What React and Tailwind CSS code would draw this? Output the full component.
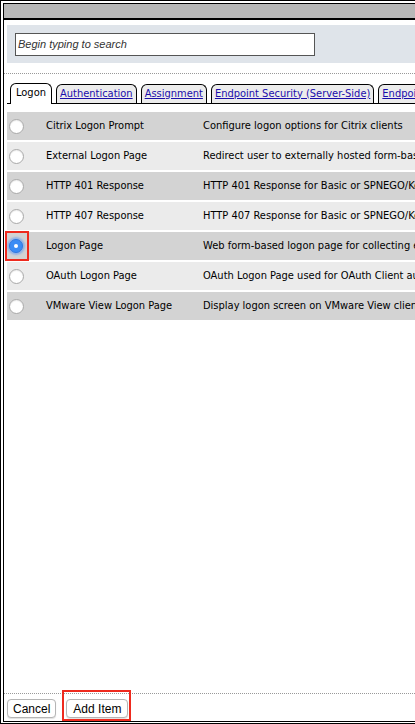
import React from "react";

const rows = [
  ["Citrix Logon Prompt", "Configure logon options for Citrix clients"],
  ["External Logon Page", "Redirect user to externally hosted form-based logon page"],
  ["HTTP 401 Response", "HTTP 401 Response for Basic or SPNEGO/Kerberos authentication"],
  ["HTTP 407 Response", "HTTP 407 Response for Basic or SPNEGO/Kerberos authentication"],
  ["Logon Page", "Web form-based logon page for collecting end user credentials"],
  ["OAuth Logon Page", "OAuth Logon Page used for OAuth Client authentication"],
  ["VMware View Logon Page", "Display logon screen on VMware View clients"],
];

const tabs = ["Authentication", "Assignment", "Endpoint Security (Server-Side)", "Endpoint Security (Client-Side)"];

function Radio({ checked }) {
  if (checked) {
    return (
      <div className="w-[14px] h-[14px] rounded-full bg-[#3b8cf5] border border-[#2f78e0] shadow-[0_0_2px_2px_rgba(90,150,245,0.55)] flex items-center justify-center">
        <div className="w-[4px] h-[4px] rounded-full bg-white" />
      </div>
    );
  }
  return (
    <div className="w-[15px] h-[15px] rounded-full bg-white border border-[#a9a9a9] shadow-[inset_0_1px_1px_rgba(0,0,0,0.08)]" />
  );
}

export default function App() {
  const font = { fontFamily: '"DejaVu Sans Condensed", "DejaVu Sans", sans-serif' };
  return (
    <div className="w-[415px] h-[724px] overflow-hidden bg-white border-l border-t border-b border-black pl-[2px] pt-[2px] pb-[1px]">
      <div className="h-full border-l border-t border-b border-black flex flex-col">
        <div className="h-[16px] bg-[#b8b8b8] border-b-2 border-black shrink-0" />
        <div className="pl-[3px] pt-[5px] flex-1 flex flex-col min-h-0">
          <div className="bg-[#dfe4ea] h-[38px] flex items-center pl-[8px]">
            <div
              className="w-[300px] h-[23px] bg-white border border-[#555] flex items-center pl-[2px] text-[11px] italic text-[#333]"
              style={{ fontFamily: '"Liberation Sans", Arial, sans-serif' }}
            >
              Begin typing to search
            </div>
          </div>
          <div className="mt-[10px] border-t border-dotted border-[#999] -ml-[3px]" />
          <div className="mt-[9px] relative w-[900px]" style={font}>
            <div className="flex items-end pl-[3px] gap-[4px] h-[21px] border-b border-black">
              <div className="h-[21px] px-[5px] border border-black border-b-0 rounded-t-[6px] bg-white text-[11px] text-black flex items-center relative top-[1px] pb-[1px]">
                Logon
              </div>
              {tabs.map((t) => (
                <div
                  key={t}
                  className="h-[19px] px-[3px] border border-black border-b-0 rounded-t-[6px] bg-[#ececec] text-[11px] text-[#1a0dab] underline flex items-center whitespace-nowrap"
                >
                  {t}
                </div>
              ))}
            </div>
          </div>
          <div className="mt-[8px] flex flex-col w-[900px]" style={font}>
            {rows.map(([name, desc], i) => (
              <div
                key={name}
                className={`h-[30px] flex items-center text-[11px] text-black border-b-2 border-white ${
                  i % 2 === 0 ? "bg-[#d3d3d3]" : "bg-[#ebebeb]"
                }`}
              >
                <div className="w-[39px] shrink-0 flex items-center pl-[2px] relative">
                  <Radio checked={name === "Logon Page"} />
                  {name === "Logon Page" && (
                    <div className="absolute left-[-2px] top-[-8px] w-[24px] h-[30px] border-2 border-[#ee2a1e]" />
                  )}
                </div>
                <div className="w-[157px] shrink-0 whitespace-nowrap">{name}</div>
                <div className="whitespace-nowrap">{desc}</div>
              </div>
            ))}
          </div>
          <div className="flex-1" />
          <div className="border-t border-dotted border-[#999] -ml-[3px]" />
          <div
            className="h-[27px] flex items-start pt-[5px] gap-[10px] pl-[0px] text-[12px]"
            style={{ fontFamily: '"Liberation Sans", Arial, sans-serif' }}
          >
            <div className="h-[19px] px-[5px] flex items-center bg-white border border-[#b5b5b5] rounded-[4px] shadow-[0_1px_1px_rgba(0,0,0,0.12)]">
              Cancel
            </div>
            <div className="relative">
              <div className="h-[19px] px-[6px] flex items-center bg-white border border-[#b5b5b5] rounded-[4px] shadow-[0_1px_1px_rgba(0,0,0,0.12)]">
                Add Item
              </div>
              <div className="absolute left-[-4px] top-[-9px] w-[69px] h-[31px] border-2 border-[#ee2a1e]" />
            </div>
          </div>
        </div>
      </div>
    </div>
  );
}
